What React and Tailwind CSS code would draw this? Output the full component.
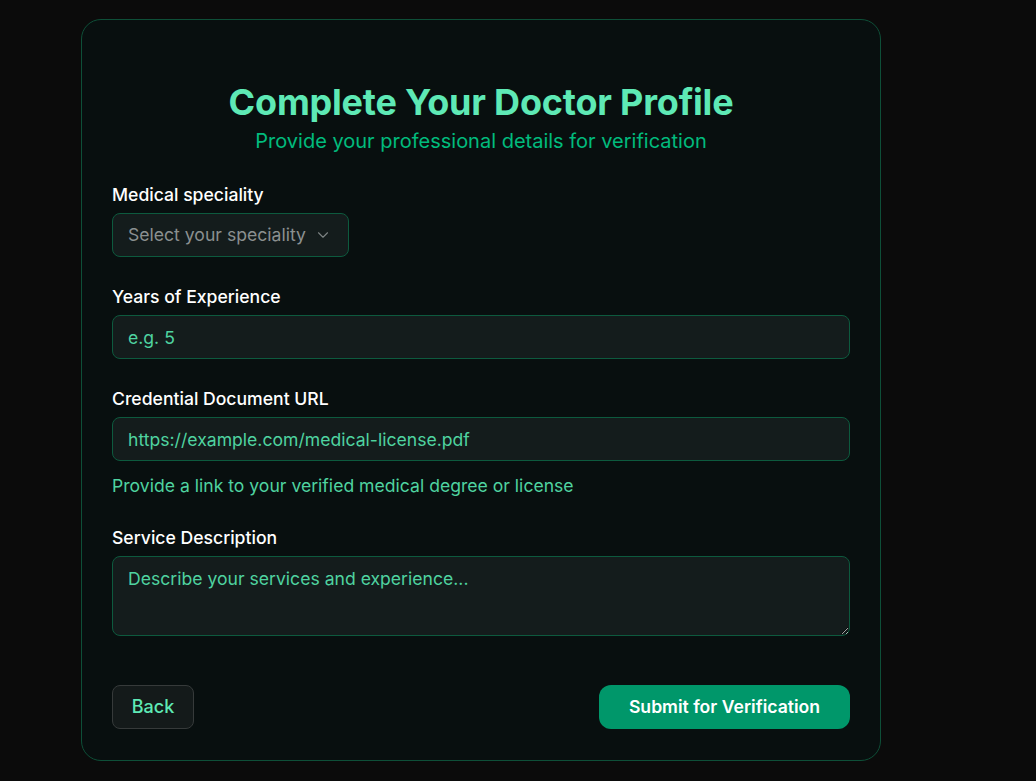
import React from 'react';
import { ChevronDown } from 'lucide-react';

const Field = ({ label, children }) => (
    <div className="flex flex-col">
        <label className="mb-[6px] text-[17.6px] leading-6 font-medium text-white">{label}</label>
        {children}
    </div>
);

const inputClass =
    "h-11 w-full rounded-lg border border-[#0d5a3e] bg-[#141c1c] px-[15px] text-[17.6px] text-emerald-300 outline-none placeholder:text-[#4fd3a0]";

export default function App() {
    return (
        <div className="min-h-screen bg-[#0b0b0b] pt-[19px] pl-[81px] pb-5" style={{ fontFamily: 'Inter, "Noto Sans", sans-serif' }}>
            <div className="w-[800px] rounded-[20px] border border-[#0e4f38] bg-[#080f0f] px-[30px] pt-[62px] pb-[31px]">
                {/* Header */}
                <div className="text-center">
                    <h1 className="text-4xl font-bold tracking-[-0.2px] text-emerald-300">Complete Your Doctor Profile</h1>
                    <p className="mt-[5px] text-xl text-emerald-500 leading-7">Provide your professional details for verification</p>
                </div>

                <form className="mt-[28px] flex flex-col gap-7" onSubmit={(e) => e.preventDefault()}>
                    <Field label="Medical speciality">
                        <button
                            type="button"
                            className="flex h-11 w-[237px] items-center gap-2 whitespace-nowrap rounded-lg border border-[#0d5a3e] bg-[#141c1c] px-[15px] text-[17.6px] text-[#8b9090]"
                        >
                            Select your speciality
                            <ChevronDown size={18} strokeWidth={1.5} className="shrink-0 text-[#7c8282]" />
                        </button>
                    </Field>

                    <Field label="Years of Experience">
                        <input type="text" placeholder="e.g. 5" className={inputClass} />
                    </Field>

                    <Field label="Credential Document URL">
                        <input type="text" placeholder="https://example.com/medical-license.pdf" className={inputClass} />
                        <p className="mt-[13px] text-[17.6px] leading-6 text-[#4fd3a0]">Provide a link to your verified medical degree or license</p>
                    </Field>

                    <Field label="Service Description">
                        <textarea
                            placeholder="Describe your services and experience..."
                            className="h-20 w-full rounded-lg border border-[#0d5a3e] bg-[#141c1c] px-[15px] py-[10px] text-[17.6px] leading-6 text-emerald-300 outline-none placeholder:text-[#4fd3a0]"
                        />
                    </Field>

                    {/* Actions */}
                    <div className="mt-[21px] flex items-center justify-between">
                        <button type="button" className="h-11 w-[82px] rounded-lg border border-[#363a3a] bg-[#141a1a] text-lg font-medium text-emerald-300">
                            Back
                        </button>
                        <button type="submit" className="h-11 w-[251px] rounded-xl bg-[#00976a] text-[17.6px] font-semibold text-white">
                            Submit for Verification
                        </button>
                    </div>
                </form>
            </div>
        </div>
    );
}
